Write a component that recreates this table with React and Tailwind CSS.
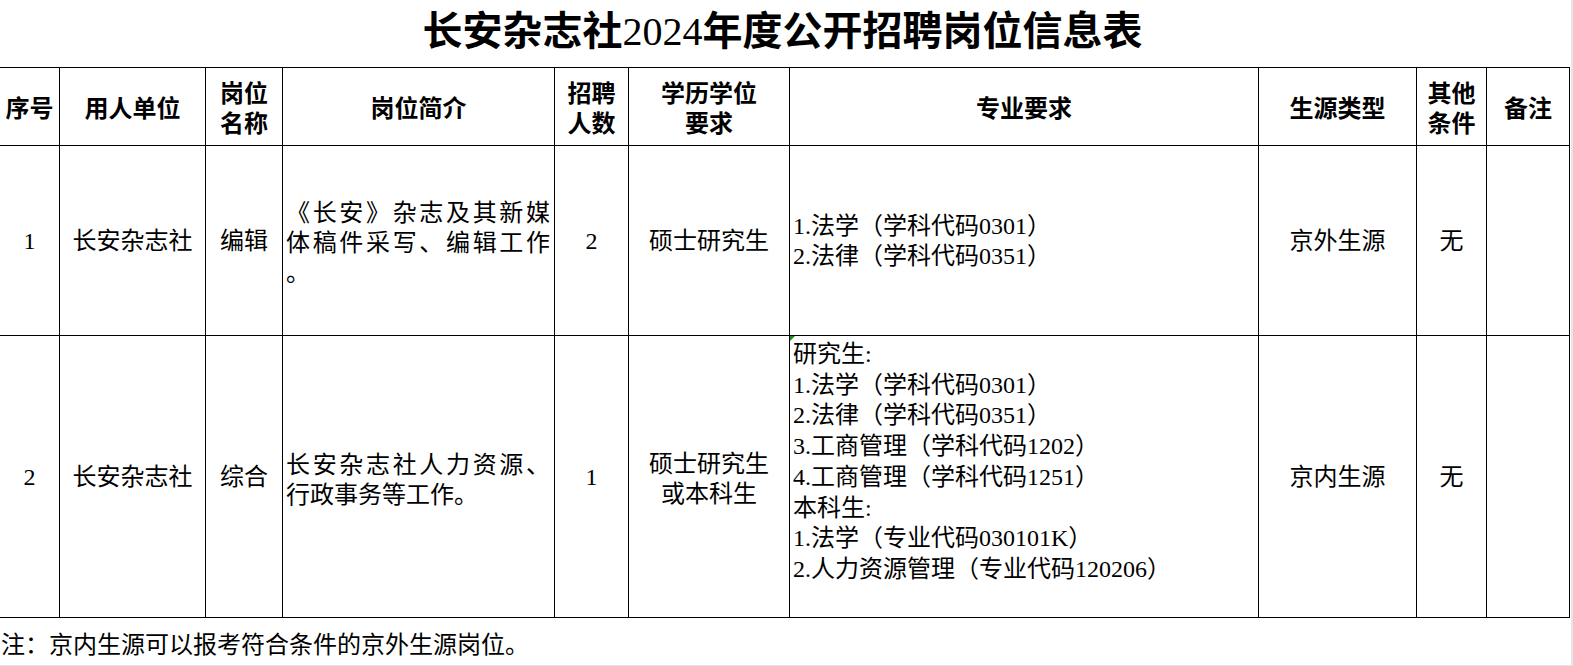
import React from "react";

const GRID =
  "grid grid-cols-[60px_146px_77px_272px_74px_161px_469px_158px_70px_83px]";
const SERIF = "font-['Liberation_Serif','Noto_Sans_CJK_SC',serif]";
const SANS = "font-['Noto_Sans_CJK_SC','Noto_Sans',sans-serif]";

function H({ children }) {
  return (
    <div
      className={`border-r border-b border-black h-[78px] flex flex-col items-center justify-center text-center ${SANS} font-bold text-[24px] leading-[30px]`}
    >
      {children}
    </div>
  );
}

function C({ children, className = "" }) {
  return (
    <div
      className={`border-r border-b border-black flex flex-col items-center justify-center text-center text-[24px] leading-[30px] ${className}`}
    >
      {children}
    </div>
  );
}

function J({ children }) {
  return (
    <div className="w-full text-justify [text-align-last:justify] whitespace-nowrap">
      {children}
    </div>
  );
}

export default function App() {
  return (
    <div className="w-[1573px] h-[666px] bg-[#e6e6e6] overflow-hidden">
      <div className={`w-[1571px] h-[665px] bg-white text-black ${SERIF}`}>
        <div className="h-[67px] flex items-center justify-center pb-[3px] pr-[6px]">
          <h1 className={`text-[40px] font-bold leading-none ${SERIF}`}>
            长安杂志社<span className="font-normal">2024</span>年度公开招聘岗位信息表
          </h1>
        </div>

        <div className={`${GRID} w-[1570px] border-t border-black`}>
          <H>序号</H>
          <H>用人单位</H>
          <H>
            <span>岗位</span>
            <span>名称</span>
          </H>
          <H>岗位简介</H>
          <H>
            <span>招聘</span>
            <span>人数</span>
          </H>
          <H>
            <span>学历学位</span>
            <span>要求</span>
          </H>
          <H>专业要求</H>
          <H>生源类型</H>
          <H>
            <span>其他</span>
            <span>条件</span>
          </H>
          <H>备注</H>

          {/* Row 1 */}
          <C className="h-[190px]">1</C>
          <C className="h-[190px]">长安杂志社</C>
          <C className="h-[190px]">编辑</C>
          <C className="h-[190px] items-start text-left pl-[3px] pr-[4px] pt-[4px]">
            <J>《长安》杂志及其新媒</J>
            <J>体稿件采写、编辑工作</J>
            <div>。</div>
          </C>
          <C className="h-[190px]">2</C>
          <C className="h-[190px]">硕士研究生</C>
          <C className="h-[190px] items-start text-left pl-[3px]">
            <div>1.法学（学科代码0301）</div>
            <div>2.法律（学科代码0351）</div>
          </C>
          <C className="h-[190px]">京外生源</C>
          <C className="h-[190px]">无</C>
          <C className="h-[190px]"></C>

          {/* Row 2 */}
          <C className="h-[282px]">2</C>
          <C className="h-[282px]">长安杂志社</C>
          <C className="h-[282px]">综合</C>
          <C className="h-[282px] items-start text-left pl-[3px] pr-[4px] pt-[6px]">
            <J>长安杂志社人力资源、</J>
            <div>行政事务等工作。</div>
          </C>
          <C className="h-[282px]">1</C>
          <C className="h-[282px] pt-[4px]">
            <div>硕士研究生</div>
            <div>或本科生</div>
          </C>
          <div className="relative border-r border-b border-black h-[282px] text-left text-[24px] leading-[30.7px] pl-[3px] pt-[3px]">
            <div className="absolute left-0 top-0 w-0 h-0 border-t-[5px] border-r-[5px] border-t-[#1e8a1e] border-r-transparent" />
            <div>研究生:</div>
            <div>1.法学（学科代码0301）</div>
            <div>2.法律（学科代码0351）</div>
            <div>3.工商管理（学科代码1202）</div>
            <div>4.工商管理（学科代码1251）</div>
            <div>本科生:</div>
            <div>1.法学（专业代码030101K）</div>
            <div>2.人力资源管理（专业代码120206）</div>
          </div>
          <C className="h-[282px]">京内生源</C>
          <C className="h-[282px]">无</C>
          <C className="h-[282px]"></C>
        </div>

        <div className="h-[47px] flex items-center pl-[1px] pt-[6px] text-[24px] leading-[30px]">
          注：京内生源可以报考符合条件的京外生源岗位。
        </div>
      </div>
    </div>
  );
}
